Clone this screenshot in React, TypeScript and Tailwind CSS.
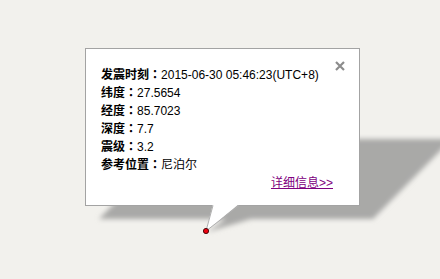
import React from "react";

const rows: [string, string][] = [
  ["发震时刻", "2015-06-30 05:46:23(UTC+8)"],
  ["纬度", "27.5654"],
  ["经度", "85.7023"],
  ["深度", "7.7"],
  ["震级", "3.2"],
  ["参考位置", "尼泊尔"],
];

export default function App() {
  return (
    <div
      className="relative w-[440px] h-[279px] overflow-hidden bg-[#f2f1ed]"
      style={{ fontFamily: '"Liberation Sans", Arial, "Noto Sans CJK SC", sans-serif' }}
    >
      {/* shadow */}
      <svg className="absolute left-0 top-0" width="440" height="279">
        <defs>
          <filter id="sb" x="-20%" y="-20%" width="140%" height="140%">
            <feGaussianBlur stdDeviation="2.8" />
          </filter>
        </defs>
        <polygon
          points="177,139 452,139 373,219 251,219 207,232 226,219 99,219"
          fill="#a9a9a7"
          filter="url(#sb)"
        />
      </svg>

      {/* info window */}
      <div className="absolute left-[85px] top-[48px] w-[275px] h-[158px] bg-white border border-[#a3a3a3] pl-[15px] pr-[26px] pt-[17px] text-[12px] leading-[18px] text-black">
        <svg className="absolute top-[12px] right-[14px]" width="10" height="10" viewBox="0 0 10 10">
          <path d="M1 1 L9 9 M9 1 L1 9" stroke="#8c8c8c" strokeWidth="2.2" />
        </svg>
        {rows.map(([k, v]) => (
          <div key={k} className="h-[18px] whitespace-nowrap">
            <span className="font-bold">{k}</span>
            <span
              className="font-bold leading-none"
              style={{ fontFamily: '"Noto Sans CJK TC", "Noto Sans CJK SC", sans-serif' }}
            >
              ：
            </span>
            <span>{v}</span>
          </div>
        ))}
        <div className="flex h-[18px] justify-end">
          <a className="text-[#800080] underline cursor-pointer">详细信息&gt;&gt;</a>
        </div>
      </div>

      {/* tail + marker */}
      <svg className="absolute left-0 top-0" width="440" height="279">
        <polygon points="213,204 206,231 239,204" fill="#ffffff" />
        <path d="M213 205.5 L206 231 L239 205.5" fill="none" stroke="#b0b0b0" strokeWidth="1" />
        <circle cx="206" cy="231" r="2.6" fill="#ee0010" stroke="#3a0000" strokeWidth="0.9" />
      </svg>
    </div>
  );
}
